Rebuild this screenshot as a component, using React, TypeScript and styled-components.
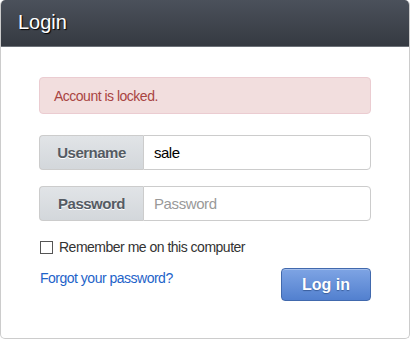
import styled, { createGlobalStyle } from "styled-components"

const GlobalStyle = createGlobalStyle`
  html, body {
    margin: 0;
    padding: 0;
    background: #ffffff;
    font-family: "Liberation Sans", Arial, sans-serif;
  }
`

const Panel = styled.div`
  width: 410px;
  height: 339px;
  box-sizing: border-box;
  border: 1px solid #cccccc;
  border-top: none;
  border-radius: 5px;
  overflow: hidden;
  display: flex;
  flex-direction: column;
`

const Header = styled.div`
  height: 47px;
  margin: 0 -1px;
  border-bottom: 1px solid #6c7178;
  background: linear-gradient(to bottom, #4b515b, #353a41);
  border-radius: 5px 5px 0 0;
  display: flex;
  align-items: center;
  padding-left: 18px;
  padding-bottom: 2px;
  box-sizing: border-box;
`

const Title = styled.h3`
  margin: 0;
  font-size: 20px;
  font-weight: normal;
  color: #ffffff;
  text-shadow: 1px 1px 1px #000000;
`

const Body = styled.div`
  padding: 30px 38px 0 38px;
  display: flex;
  flex-direction: column;
`

const Alert = styled.div`
  height: 37px;
  box-sizing: border-box;
  padding: 0 14px;
  display: flex;
  align-items: center;
  background: #f2dede;
  border: 1px solid #ebccd1;
  border-radius: 4px;
  color: #a94442;
  font-size: 14px;
  letter-spacing: -0.5px;
  margin-bottom: 21px;
`

const InputGroup = styled.div<{ $gap?: number }>`
  display: flex;
  height: 35px;
  margin-bottom: ${(p) => p.$gap ?? 0}px;
`

const Addon = styled.span`
  width: 104px;
  box-sizing: border-box;
  display: flex;
  align-items: center;
  justify-content: center;
  background: linear-gradient(to bottom, #e1e4e7, #d3d7db);
  border: 1px solid #cccccc;
  border-right: none;
  border-radius: 4px 0 0 4px;
  font-size: 15px;
  font-weight: bold;
  letter-spacing: -0.5px;
  color: #555b63;
  text-shadow: 0 1px 0 #ffffff;
`

const Field = styled.input`
  flex: 1;
  min-width: 0;
  box-sizing: border-box;
  height: 35px;
  border: 1px solid #cccccc;
  border-radius: 0 4px 4px 0;
  padding: 0 10px;
  font-family: inherit;
  font-size: 15px;
  letter-spacing: -0.5px;
  color: #000000;
  outline: none;
  &::placeholder {
    color: #999999;
    letter-spacing: -0.4px;
  }
`

const CheckRow = styled.label`
  display: flex;
  align-items: center;
  gap: 6px;
  margin-top: 18px;
  font-size: 14px;
  letter-spacing: -0.5px;
  color: #333333;
`

const Box = styled.span`
  width: 13px;
  height: 13px;
  box-sizing: border-box;
  border: 1px solid #555555;
  background: #ffffff;
  margin-left: 1px;
`

const Footer = styled.div`
  display: flex;
  justify-content: space-between;
  align-items: flex-start;
  margin-top: 13px;
`

const ForgotLink = styled.a`
  font-size: 14px;
  letter-spacing: -0.5px;
  color: #1e63c9;
  text-decoration: none;
  padding-left: 1px;
  margin-top: 2px;
`

const LoginButton = styled.button`
  width: 90px;
  height: 33px;
  border: 1px solid #4169ad;
  border-radius: 4px;
  background: linear-gradient(to bottom, #7ea4e4, #5280cf);
  color: #ffffff;
  font-family: inherit;
  font-size: 16px;
  font-weight: bold;
  text-shadow: 0 1px 1px #3a5e9c;
  box-shadow: inset 0 1px 0 rgba(255, 255, 255, 0.3);
`

const App = () => {
  return (
    <>
      <GlobalStyle />
      <Panel>
        <Header>
          <Title>Login</Title>
        </Header>
        <Body>
          <Alert>Account is locked.</Alert>
          <InputGroup $gap={16}>
            <Addon>Username</Addon>
            <Field defaultValue="sale" />
          </InputGroup>
          <InputGroup>
            <Addon>Password</Addon>
            <Field type="password" placeholder="Password" />
          </InputGroup>
          <CheckRow>
            <Box />
            Remember me on this computer
          </CheckRow>
          <Footer>
            <ForgotLink href="#">Forgot your password?</ForgotLink>
            <LoginButton>Log in</LoginButton>
          </Footer>
        </Body>
      </Panel>
    </>
  )
}

export default App
